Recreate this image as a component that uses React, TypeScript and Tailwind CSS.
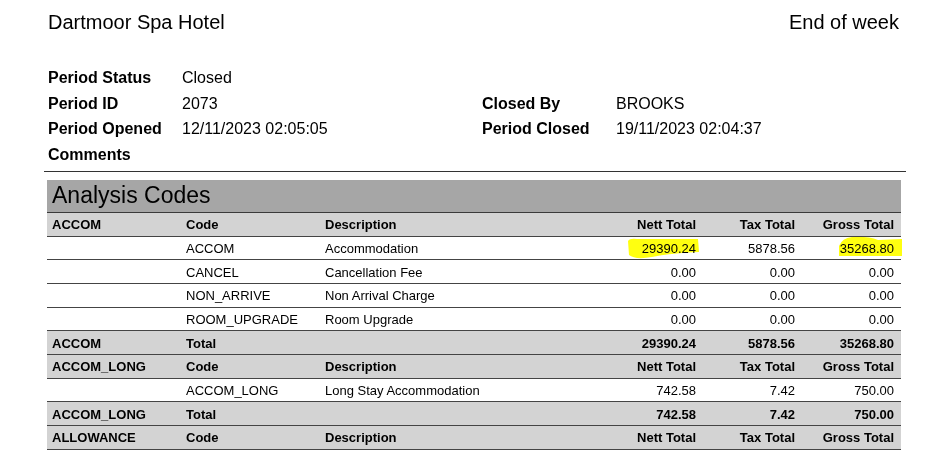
import React from "react";

type Row = {
  kind: "head" | "data" | "total";
  group?: string;
  code?: string;
  desc?: string;
  nett: string;
  tax: string;
  gross: string;
  mark?: boolean;
};

const rows: Row[] = [
  { kind: "head", group: "ACCOM", code: "Code", desc: "Description", nett: "Nett Total", tax: "Tax Total", gross: "Gross Total" },
  { kind: "data", code: "ACCOM", desc: "Accommodation", nett: "29390.24", tax: "5878.56", gross: "35268.80", mark: true },
  { kind: "data", code: "CANCEL", desc: "Cancellation Fee", nett: "0.00", tax: "0.00", gross: "0.00" },
  { kind: "data", code: "NON_ARRIVE", desc: "Non Arrival Charge", nett: "0.00", tax: "0.00", gross: "0.00" },
  { kind: "data", code: "ROOM_UPGRADE", desc: "Room Upgrade", nett: "0.00", tax: "0.00", gross: "0.00" },
  { kind: "total", group: "ACCOM", code: "Total", nett: "29390.24", tax: "5878.56", gross: "35268.80" },
  { kind: "head", group: "ACCOM_LONG", code: "Code", desc: "Description", nett: "Nett Total", tax: "Tax Total", gross: "Gross Total" },
  { kind: "data", code: "ACCOM_LONG", desc: "Long Stay Accommodation", nett: "742.58", tax: "7.42", gross: "750.00" },
  { kind: "total", group: "ACCOM_LONG", code: "Total", nett: "742.58", tax: "7.42", gross: "750.00" },
  { kind: "head", group: "ALLOWANCE", code: "Code", desc: "Description", nett: "Nett Total", tax: "Tax Total", gross: "Gross Total" },
];

// highlighter strokes drawn over the two figures
function NettMark() {
  return (
    <svg className="absolute left-[30px] top-[-4px] mix-blend-multiply pointer-events-none" width="74" height="25" viewBox="0 0 74 25">
      <path d="M1 4 Q3 1 10 2 L71 2 L72 15 Q45 16 25 20 Q8 23 2 18 Z" fill="#ffff10" />
    </svg>
  );
}

function GrossMark() {
  return (
    <svg className="absolute left-[43px] top-[-5px] mix-blend-multiply pointer-events-none" width="66" height="24" viewBox="0 0 66 24">
      <path d="M1 10 Q4 2 14 1 Q30 0 40 4 L64 3 L64 20 L1 20 Z" fill="#ffff10" />
    </svg>
  );
}

function TableRow({ row }: { row: Row }) {
  const bg = row.kind === "data" ? "bg-white" : "bg-[#d3d3d3]";
  const weight = row.kind === "data" ? "font-normal" : "font-bold";
  return (
    <div className={`grid grid-cols-[134px_139px_1fr_99px_99px_99px] items-center h-[23.7px] pt-[2px] pl-[5px] pr-[7px] border-b border-[#444] text-[13px] leading-[16px] ${bg} ${weight}`}>
      <div>{row.group}</div>
      <div>{row.code}</div>
      <div>{row.desc}</div>
      <div className="relative text-right">
        {row.mark && <NettMark />}
        <span className="relative">{row.nett}</span>
      </div>
      <div className="text-right">{row.tax}</div>
      <div className="relative text-right">
        {row.mark && <GrossMark />}
        <span className="relative">{row.gross}</span>
      </div>
    </div>
  );
}

export default function App() {
  return (
    <div className="w-[946px] h-[452px] overflow-hidden bg-white text-black font-['Liberation_Sans',Arial,sans-serif]">
      {/* Report header */}
      <div className="flex justify-between pl-[48px] pr-[47px] pt-[10px] text-[20px] leading-[24px]">
        <span>Dartmoor Spa Hotel</span>
        <span>End of week</span>
      </div>

      {/* Period details */}
      <div className="grid grid-cols-[134px_300px_134px_1fr] pl-[48px] mt-[31px] text-[16px] leading-[25.6px]">
        <div className="font-bold">Period Status</div>
        <div>Closed</div>
        <div></div>
        <div></div>

        <div className="font-bold">Period ID</div>
        <div>2073</div>
        <div className="font-bold">Closed By</div>
        <div>BROOKS</div>

        <div className="font-bold">Period Opened</div>
        <div>12/11/2023 02:05:05</div>
        <div className="font-bold">Period Closed</div>
        <div>19/11/2023 02:04:37</div>

        <div className="font-bold">Comments</div>
        <div></div>
        <div></div>
        <div></div>
      </div>

      <div className="ml-[44px] w-[862px] h-px bg-[#333] mt-[3.5px]"></div>

      {/* Analysis codes */}
      <div className="ml-[47px] w-[854px] mt-[8px]">
        <div className="h-[33px] bg-[#a6a6a6] border-b border-[#3a3a3a] pl-[5px] text-[23px] leading-[31px]">
          Analysis Codes
        </div>
        {rows.map((r, i) => (
          <TableRow key={i} row={r} />
        ))}
      </div>
    </div>
  );
}
